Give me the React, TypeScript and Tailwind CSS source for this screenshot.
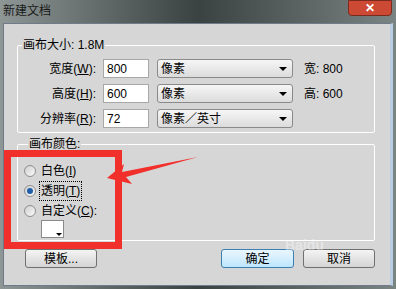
import React from "react";

const cjk = { fontFamily: '"Liberation Sans", "Noto Sans CJK SC", sans-serif' };

function Row({ label, k, value, unit, right }: { label: string; k: string; value: string; unit: string; right?: string }) {
  return (
    <div className="flex items-center h-[19px]">
      <div className="w-[78px] text-right text-[12px] text-black">
        {label}(<u>{k}</u>):
      </div>
      <div className="ml-[7px] w-[46px] h-[19px] bg-white border border-[#a8a8a8] flex items-center pl-[3px] text-[12px]">
        {value}
      </div>
      <div className="ml-[8px] w-[136px] h-[19px] rounded-[3px] border border-[#8a8a8a] bg-gradient-to-b from-[#f6f6f6] to-[#dcdcdc] flex items-center justify-between pl-[3px] pr-[5px] text-[12px]">
        <span>{unit}</span>
        <span className="w-0 h-0 border-l-[4px] border-r-[4px] border-t-[4px] border-l-transparent border-r-transparent border-t-black" />
      </div>
      {right && <div className="ml-[11px] text-[12px]">{right}</div>}
    </div>
  );
}

function Radio({ checked, label, k, focus }: { checked?: boolean; label: string; k: string; focus?: boolean }) {
  return (
    <div className="flex items-center h-[19px] gap-[4px]">
      <span className="w-[12px] h-[12px] rounded-full border border-[#8e8f8f] bg-gradient-to-br from-[#d0d0d0] to-[#fafafa] flex items-center justify-center">
        {checked && <span className="w-[6px] h-[6px] rounded-full bg-[#1f5ea8]" />}
      </span>
      <span className={"text-[12px] px-[1px] " + (focus ? "outline outline-1 outline-dotted outline-black" : "")}>
        {label}(<u>{k}</u>){k === "C" ? ":" : ""}
      </span>
    </div>
  );
}

export default function App() {
  return (
    <div className="relative w-[396px] h-[289px] overflow-hidden bg-gradient-to-r from-[#8e9796] via-[#3b4342] to-[#7a8483]" style={cjk}>
      {/* title bar */}
      <div className="h-[23px] flex items-start justify-between">
        <span className="ml-[3px] mt-[2px] text-[12px] text-[#1a1a1a]">新建文档</span>
        <div className="mr-[4px] w-[44px] h-[16px] rounded-b-[4px] border border-[#7a2a20] bg-[#cc4a33] flex items-center justify-center text-white text-[12px] font-bold leading-none">
          ✕
        </div>
      </div>

      {/* body */}
      <div className="mx-[3px] h-[263px] bg-[#d6d6d6] border border-[#6f7b8a] border-r-[3px] border-r-[#b9cde4] pl-[13px] pr-[15px] pt-[12px]">
        <fieldset className="border border-white rounded-[2px] px-0 pt-[5px] pb-[4px] text-[12px]">
          <legend className="ml-[4px] px-[1px] text-[12px]">画布大小: 1.8M</legend>
          <div className="flex flex-col gap-[6px]">
            <Row label="宽度" k="W" value="800" unit="像素" right="宽: 800" />
            <Row label="高度" k="H" value="600" unit="像素" right="高: 600" />
            <Row label="分辨率" k="R" value="72" unit="像素／英寸" />
          </div>
        </fieldset>

        <fieldset className="mt-[2px] border border-white rounded-[2px] h-[106px] pl-[6px] pt-[8px] text-[12px]">
          <legend className="ml-[4px] px-[1px] text-[12px]">画布颜色:</legend>
          <div className="flex flex-col gap-[1px]">
            <Radio label="白色" k="I" />
            <Radio label="透明" k="T" checked focus />
            <Radio label="自定义" k="C" />
          </div>
          <div className="ml-[17px] w-[23px] h-[18px] bg-white border border-[#8a8a8a] relative">
            <span className="absolute right-[1px] bottom-[1px] w-0 h-0 border-l-[3px] border-r-[3px] border-t-[3px] border-l-transparent border-r-transparent border-t-black" />
          </div>
        </fieldset>

        <div className="mt-[8px] flex items-center pl-[8px] pr-[0px]">
          <button className="w-[72px] h-[19px] rounded-[3px] border border-[#707070] bg-gradient-to-b from-[#f4f4f4] to-[#d4d4d4] text-[12px]">
            模板...
          </button>
          <div className="flex-1" />
          <button className="w-[73px] h-[19px] rounded-[3px] border border-[#3c7fb1] bg-gradient-to-b from-[#eaf6fd] to-[#bee6fd] text-[12px]">
            确定
          </button>
          <button className="ml-[9px] w-[72px] h-[19px] rounded-[3px] border border-[#707070] bg-gradient-to-b from-[#f4f4f4] to-[#d4d4d4] text-[12px]">
            取消
          </button>
        </div>
      </div>

      {/* red annotation */}
      <div className="absolute left-[4px] top-[150px] w-[118px] h-[99px] border-[7px] border-[#f2302b]" />
      <svg className="absolute left-0 top-0" width="396" height="289">
        <polygon points="107,178 124,164 122,172 198,157 126,177 132,184" fill="#f2302b" />
      </svg>

      {/* watermark */}
      <div className="absolute left-[285px] top-[238px] text-[14px] font-bold text-white/40 leading-none" style={{ fontFamily: '"Liberation Sans", sans-serif' }}>
        Baidu
      </div>
    </div>
  );
}
